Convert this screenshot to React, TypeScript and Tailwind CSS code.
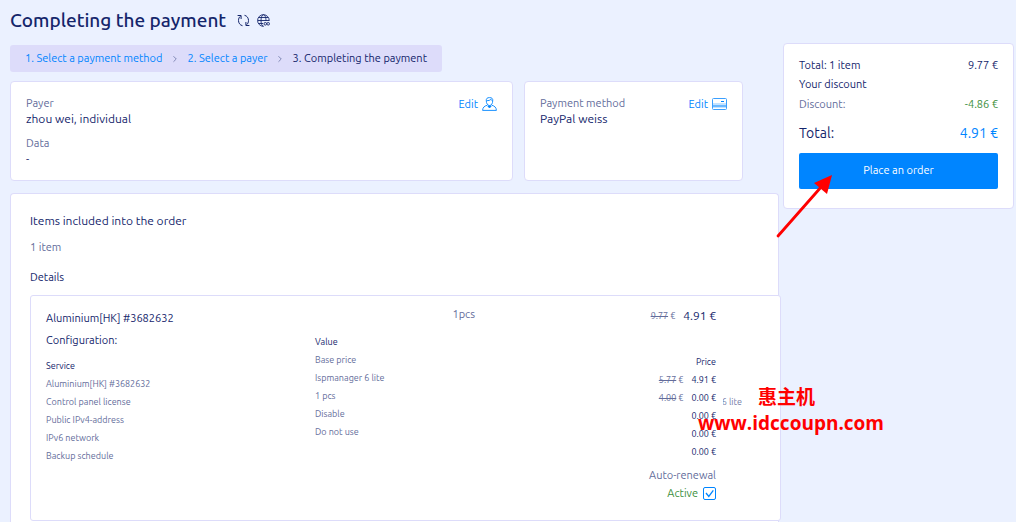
import { ChevronRight } from 'lucide-react';

const services = [
  'Aluminium[HK] #3682632',
  'Control panel license',
  'Public IPv4-address',
  'IPv6 network',
  'Backup schedule',
];

const values = ['Base price', 'Ispmanager 6 lite', '1 pcs', 'Disable', 'Do not use'];

const prices = [
  { price: '4.91 €', old: '5.77' },
  { price: '0.00 €', old: '4.00' },
  { price: '0.00 €' },
  { price: '0.00 €' },
  { price: '0.00 €' },
];

function RefreshIcon() {
  return (
    <svg className="size-[13px]" viewBox="0 0 13 13" fill="none" stroke="currentColor" aria-hidden="true">
      <path d="M5.500 11.700C3 11.200 1.500 9 1.500 6.500c0-1.900.8-3.600 2.200-4.600M.6 1.500h3.500V5" />
      <path d="M7.500 1.300c2.500.5 4 2.700 4 5.200 0 1.900-.8 3.600-2.200 4.600M12.400 11.500H8.900V8" />
    </svg>
  );
}

function GlobeIcon() {
  return (
    <svg className="size-[13px]" viewBox="0 0 13 13" fill="none" stroke="currentColor" strokeWidth=".9" aria-hidden="true">
      <path d="M12.200 6.800A5.800 5.800 0 1 0 6.500 12.300" />
      <path d="M9 7C9 3 7.800.7 6.500.7S4 3 4 6.500s1.200 5.800 2.500 5.800M.8 6.500h11.400M1.700 3.500h9.600M1.700 9.500H6" />
      <circle cx="8.300" cy="9.800" r="1.300" />
      <circle cx="11.200" cy="9.800" r="1.300" />
    </svg>
  );
}

function PayerIcon() {
  return (
    <svg className="h-[14px] w-[15px]" viewBox="0 0 15 14" fill="none" stroke="currentColor" strokeWidth=".9" aria-hidden="true">
      <path d="M4.300 3.800C4 1.500 5.300.6 7.500.6s3.600.9 3.200 3.200c0 2.500-1.200 4.700-3.200 4.700s-3.200-2.200-3.200-4.700Z" />
      <path d="M4.600 3.600c1.900.2 3.400-.3 4.300-1.300.3.700.8 1.200 1.600 1.400" />
      <path d="M5.300 8.200C2.300 9 .7 10.500.6 13.400h13.800c-.1-2.900-1.700-4.400-4.700-5.200" />
      <path d="M5.800 9 7.500 11l1.700-2Z" fill="currentColor" />
    </svg>
  );
}

function CardIcon() {
  return (
    <svg className="h-3 w-[15px]" viewBox="0 0 15 12" fill="none" aria-hidden="true">
      <rect x="1" y="5" width="13" height="2" fill="#c5e3ff" />
      <rect x="1" y="7" width="13" height="2" fill="#6db9ff" />
      <rect x="1" y="9" width="13" height="1" fill="#c5e3ff" />
      <rect x=".5" y=".5" width="14" height="11" rx="1" stroke="#3a9fff" />
      <path d="M9 3.500h3" stroke="currentColor" />
    </svg>
  );
}

function Breadcrumbs() {
  return (
    <nav className="flex h-[27px] w-[432px] items-center justify-between rounded-[3px] bg-[#dddcfa] px-[15px]">
      <a href="#method" className="text-[#0085ff]">1. Select a payment method</a>
      <ChevronRight className="size-[10px] text-[#6f78a8]" />
      <a href="#payer" className="text-[#0085ff]">2. Select a payer</a>
      <ChevronRight className="size-[10px] text-[#6f78a8]" />
      <span>3. Completing the payment</span>
    </nav>
  );
}

function Summary() {
  return (
    <aside className="mt-[43px] mr-[2px] w-[231px] shrink-0 self-start rounded-[4px] border border-[#dddcfa] bg-white px-[15px] pt-[11px] pb-[19px]">
      <div className="flex h-5 items-center justify-between">
        <span>Total: 1 item</span>
        <span>9.77 €</span>
      </div>
      <p className="leading-[19px]">Your discount</p>
      <div className="flex h-5 items-center justify-between">
        <span className="text-[#646d9b]">Discount:</span>
        <span className="text-[#3c8f3c]">-4.86 €</span>
      </div>
      <div className="mt-2 flex h-[22px] items-center justify-between text-[14px]">
        <span>Total:</span>
        <span className="text-[#0085ff]">4.91 €</span>
      </div>
      <button type="button" className="mt-[9px] h-9 w-full rounded-[2px] bg-[#0085ff] pb-[2px] text-white">
        Place an order
      </button>
    </aside>
  );
}

function OrderItem() {
  return (
    <article className="relative mt-2 -mr-[3px] flex h-[226px] rounded-[3px] border border-[#dddcfa] bg-white pr-16 pl-[15px]">
      <div className="w-[269px] pt-3">
        <h4 className="leading-5">Aluminium[HK] #3682632</h4>
        <p className="mt-[2px] leading-5">Configuration:</p>
        <table className="mt-[7px] text-[9px] leading-[18px] text-[#646d9b]">
          <thead>
            <tr><th className="p-0 text-left font-normal text-[#14256b]">Service</th></tr>
          </thead>
          <tbody>
            {services.map((name) => (
              <tr key={name}><td className="p-0">{name}</td></tr>
            ))}
          </tbody>
        </table>
      </div>

      <table className="mt-[37px] self-start text-[9px] leading-[18px] text-[#646d9b]">
        <thead>
          <tr><th className="p-0 text-left font-normal text-[#14256b]">Value</th></tr>
        </thead>
        <tbody>
          {values.map((value) => (
            <tr key={value}><td className="p-0">{value}</td></tr>
          ))}
        </tbody>
      </table>

      <p className="ml-[68px] pt-2 leading-5 text-[#646d9b]">1pcs</p>

      <div className="ml-auto flex flex-col items-end pt-[10px]">
        <p className="flex items-center gap-2 leading-5">
          <span className="text-[9px] text-[#646d9b]"><s>9.77</s> €</span>
          <span className="text-[12px]">4.91 €</span>
        </p>
        <table className="mt-[27px] text-right text-[9px] leading-[18px]">
          <thead>
            <tr><th className="p-0 text-right font-normal">Price</th></tr>
          </thead>
          <tbody>
            {prices.map((row, i) => (
              <tr key={i}>
                <td className="p-0">
                  {row.old && <span className="mr-2 text-[#646d9b]"><s>{row.old}</s> €</span>}
                  {row.price}
                </td>
              </tr>
            ))}
          </tbody>
        </table>
        <p className="mt-[5px] leading-[18px] text-[#646d9b]">Auto-renewal</p>
        <label className="flex items-center gap-[5px] leading-[18px] text-[#3c8f3c]">
          Active
          <span className="grid size-[13px]">
            <input
              type="checkbox"
              defaultChecked
              className="peer size-[13px] appearance-none rounded-[2px] border border-[#0085ff] bg-white [grid-area:1/1]"
            />
            <svg
              className="pointer-events-none hidden size-[13px] text-[#0085ff] [grid-area:1/1] peer-checked:block"
              viewBox="0 0 13 13"
              fill="none"
              stroke="currentColor"
              strokeWidth="1.300"
            >
              <path d="M3 6 5.800 9.500 10.300 3.300" />
            </svg>
          </span>
        </label>
      </div>

      {/* leftover of a label that slides under the price column */}
      <span className="absolute top-[97px] right-[38px] flex w-[19px] justify-end overflow-hidden text-[9px] leading-[18px] whitespace-nowrap text-[#757da8]">
        6 lite
      </span>
    </article>
  );
}

export default function App() {
  return (
    <div className="relative flex min-h-screen gap-1 overflow-hidden bg-[#ebf1ff] font-['Ubuntu','Open_Sans',sans-serif] text-[11px] text-[#14256b]">
      <main className="flex min-w-0 flex-1 flex-col pl-[10px]">
        <header className="flex h-[45px] items-center gap-[7px] pb-1">
          <h1 className="mr-1 text-[19px] font-medium">Completing the payment</h1>
          <button type="button" aria-label="Refresh"><RefreshIcon /></button>
          <button type="button" aria-label="Language"><GlobeIcon /></button>
        </header>

        <Breadcrumbs />

        <div className="mt-[9px] mr-9 flex gap-[11px]">
          <section className="flex h-[100px] flex-1 items-start justify-between rounded-[4px] border border-[#dddcfa] bg-white px-[15px] pt-[13px]">
            <div className="leading-4">
              <p className="text-[#646d9b]">Payer</p>
              <p className="text-[12px] leading-4">zhou wei, individual</p>
              <p className="mt-2 text-[#646d9b]">Data</p>
              <p>-</p>
            </div>
            <a href="#payer" className="flex items-center gap-1 leading-[18px] text-[#0085ff]">
              Edit <PayerIcon />
            </a>
          </section>
          <section className="flex h-[100px] w-[219px] items-start justify-between rounded-[4px] border border-[#dddcfa] bg-white px-[15px] pt-[13px]">
            <div className="leading-4">
              <p className="text-[#646d9b]">Payment method</p>
              <p className="text-[12px] leading-4">PayPal weiss</p>
            </div>
            <a href="#method" className="flex items-center gap-1 leading-[18px] text-[#0085ff]">
              Edit <CardIcon />
            </a>
          </section>
        </div>

        <section className="mt-3 flex-1 rounded-t-[4px] border border-b-0 border-[#dddcfa] bg-white pt-[17px] pl-[19px]">
          <h2 className="text-[12px] leading-5">Items included into the order</h2>
          <p className="mt-[6px] leading-5 text-[#646d9b]">1 item</p>
          <h3 className="mt-[10px] leading-5">Details</h3>
          <OrderItem />
        </section>
      </main>

      <Summary />

      <svg className="pointer-events-none absolute top-[173px] right-[182px] h-[66px] w-[58px]" viewBox="0 0 58 66" aria-hidden="true">
        <path d="M2 63 46 13" stroke="#f00" strokeWidth="2.800" strokeLinecap="round" />
        <path d="M56 2 51 21 38 10Z" fill="#f00" />
      </svg>
      <div className="pointer-events-none absolute top-[384px] right-[132px] text-right font-['Open_Sans','Noto_Sans_CJK_SC',sans-serif] text-[19px] leading-[26px] font-bold text-[#f00]">
        <p className="mr-[69px]">惠主机</p>
        <p>www.idccoupn.com</p>
      </div>
    </div>
  );
}
